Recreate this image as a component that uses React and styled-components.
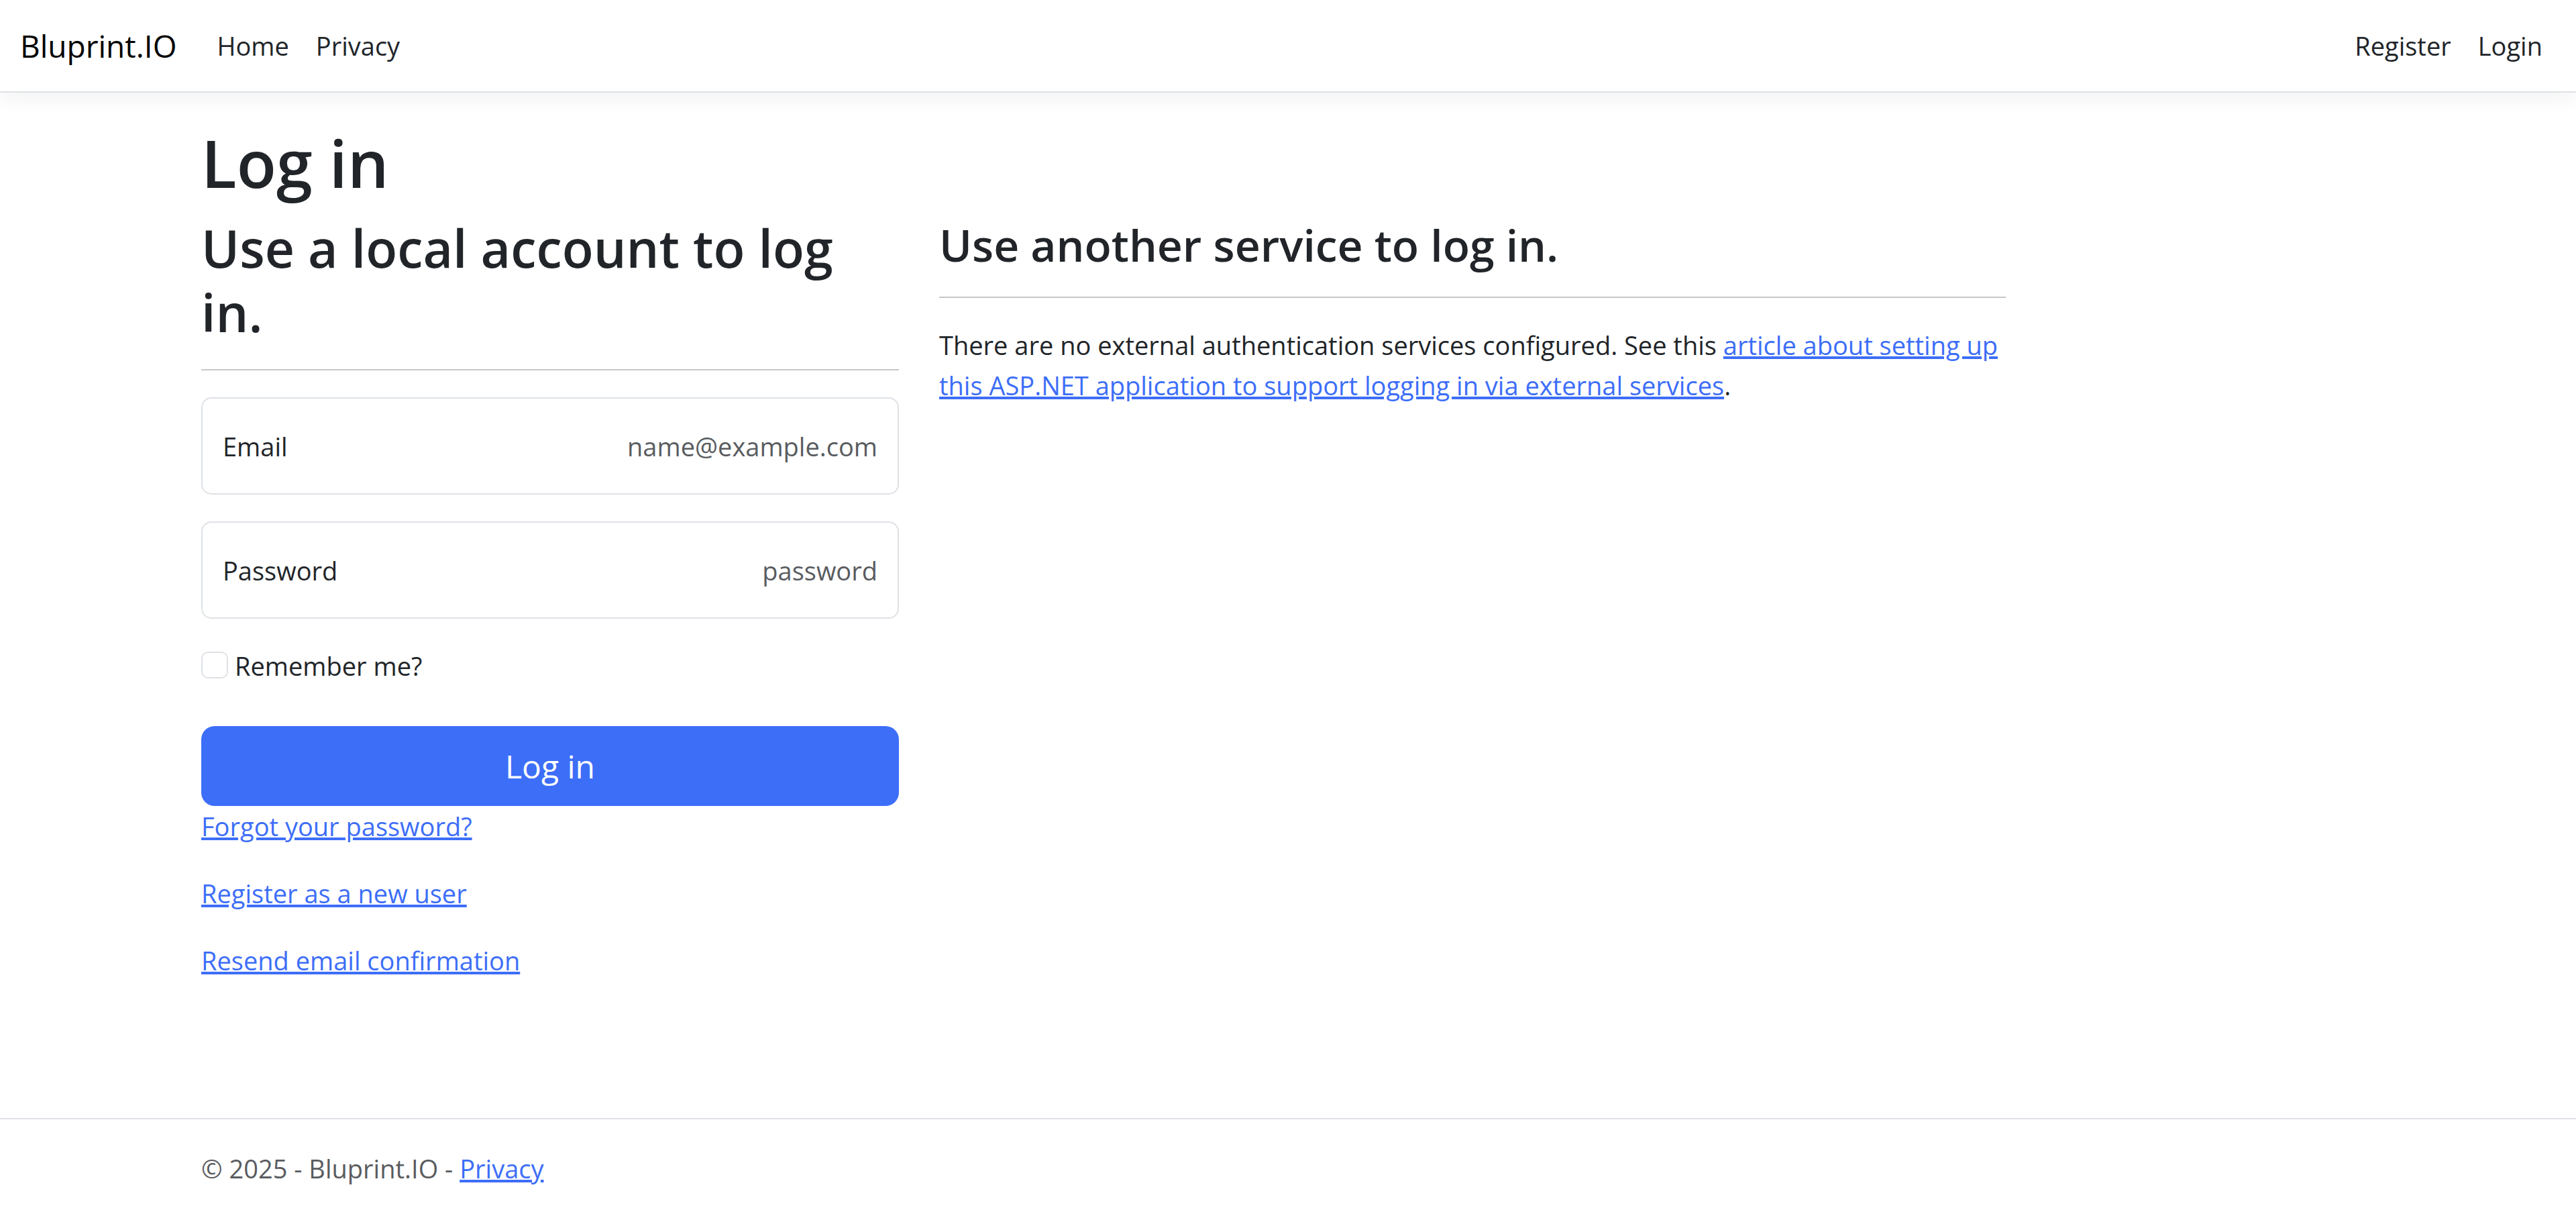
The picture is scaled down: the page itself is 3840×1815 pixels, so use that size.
import React from "react";
import styled, { createGlobalStyle } from "styled-components";

const color = {
  text: "#212529",
  muted: "#595c5f",
  primary: "#3d6ef8",
  border: "#dee2e6",
  rule: "#c7c8c9",
};

const GlobalStyle = createGlobalStyle`
  *, *::before, *::after { box-sizing: border-box; }
  body {
    margin: 0;
    background: #fff;
    color: ${color.text};
    font-family: "Open Sans", "Noto Sans", sans-serif;
    font-size: 38px;
    line-height: 60px;
  }
`;

const Page = styled.div`
  min-height: 100vh;
  display: flex;
  flex-direction: column;
`;

const Navbar = styled.header`
  display: flex;
  align-items: center;
  padding: 18px 30px;
  margin-bottom: 40px;
  border-bottom: 2px solid ${color.border};
  box-shadow: 0 10px 30px rgba(0, 0, 0, 0.05);
`;

const Brand = styled.a`
  margin-right: 40px;
  color: #000;
  font-size: 46px;
  text-decoration: none;
`;

const NavGroup = styled.nav`
  display: flex;

  &:last-child { margin-left: auto; }
`;

const NavLink = styled.a`
  padding: 20px;
  color: ${color.text};
  text-decoration: none;
`;

const Container = styled.div`
  width: 100%;
  max-width: 3300px;
  margin: 0 auto;
  padding: 0 30px;
`;

const Main = styled(Container).attrs({ as: "main" })`
  flex: 1;
`;

const Title = styled.h1`
  margin: 0 0 16px;
  padding-top: 4px;
  font-size: 97px;
  font-weight: 600;
  line-height: 120px;
`;

const Columns = styled.div`
  display: grid;
  grid-template-columns: 4fr 6fr 2fr;
  margin: 0 -30px;
`;

const Column = styled.section`
  padding: 0 30px;
`;

const Heading = styled.h2`
  margin: 0;
  padding-top: 4px;
  font-size: 77px;
  font-weight: 600;
  line-height: 96px;
`;

const SubHeading = styled.h3`
  margin: 0;
  padding-top: 4px;
  font-size: 66px;
  font-weight: 600;
  line-height: 84px;
`;

const Rule = styled.hr`
  margin: 36px 0 40px;
  border: 0;
  border-top: 2px solid ${color.rule};
`;

const Text = styled.p`
  margin: 0 0 40px;
`;

const Link = styled.a`
  color: ${color.primary};
  text-decoration: underline;
  text-decoration-thickness: 4px;
`;

const Field = styled.div`
  display: flex;
  align-items: center;
  height: 145px;
  margin-bottom: 40px;
  padding: 0 30px;
  border: 2px solid ${color.border};
  border-radius: 15px;
`;

const Input = styled.input`
  flex: 1;
  min-width: 0;
  padding: 0;
  border: 0;
  outline: 0;
  background: transparent;
  color: ${color.text};
  font: inherit;
  text-align: right;

  &::placeholder { color: ${color.muted}; opacity: 1; }
`;

const CheckLabel = styled.label`
  display: flex;
  width: fit-content;
  gap: 10px;
  margin-bottom: 60px;
`;

const Checkbox = styled.input`
  appearance: none;
  width: 40px;
  height: 40px;
  margin: 9px 0 0;
  border: 2px solid ${color.border};
  border-radius: 10px;
  background: #fff;

  &:checked { background: ${color.primary}; }
`;

const SubmitButton = styled.button`
  display: block;
  width: 100%;
  padding: 22px 40px;
  border: 0;
  border-radius: 20px;
  background: ${color.primary};
  color: #fff;
  font: inherit;
  font-size: 48px;
  line-height: 75px;
`;

const Footer = styled.footer`
  border-top: 2px solid ${color.border};
  color: ${color.muted};
  line-height: 147px;
`;

function FormField({ id, label, ...input }) {
  return (
    <Field>
      <label htmlFor={id}>{label}</label>
      <Input id={id} {...input} />
    </Field>
  );
}

export default function App() {
  return (
    <Page>
      <GlobalStyle />
      <Navbar>
        <Brand href="#">Bluprint.IO</Brand>
        <NavGroup>
          <NavLink href="#">Home</NavLink>
          <NavLink href="#">Privacy</NavLink>
        </NavGroup>
        <NavGroup>
          <NavLink href="#">Register</NavLink>
          <NavLink href="#">Login</NavLink>
        </NavGroup>
      </Navbar>
      <Main>
        <Title>Log in</Title>
        <Columns>
          <Column>
            <form onSubmit={(event) => event.preventDefault()}>
              <Heading>Use a local account to log in.</Heading>
              <Rule />
              <FormField id="email" label="Email" type="email" placeholder="name@example.com" />
              <FormField id="password" label="Password" type="password" placeholder="password" />
              <CheckLabel htmlFor="remember">
                <Checkbox id="remember" type="checkbox" />
                Remember me?
              </CheckLabel>
              <SubmitButton type="submit">Log in</SubmitButton>
              <Text><Link href="#">Forgot your password?</Link></Text>
              <Text><Link href="#">Register as a new user</Link></Text>
              <Text><Link href="#">Resend email confirmation</Link></Text>
            </form>
          </Column>
          <Column>
            <SubHeading>Use another service to log in.</SubHeading>
            <Rule />
            <Text>
              There are no external authentication services configured. See this{" "}
              <Link href="#">
                article about setting up this ASP.NET application to support logging in via external services
              </Link>
              .
            </Text>
          </Column>
        </Columns>
      </Main>
      <Footer>
        <Container>
          © 2025 - Bluprint.IO - <Link href="#">Privacy</Link>
        </Container>
      </Footer>
    </Page>
  );
}
